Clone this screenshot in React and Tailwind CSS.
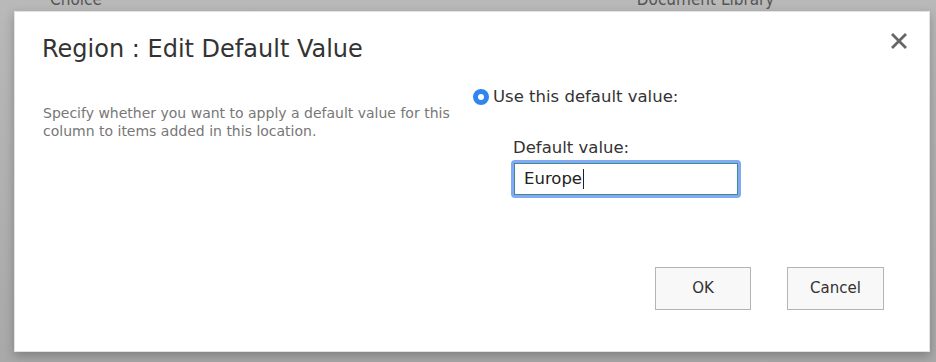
import React from "react";

const App = () => {
  return (
    <div
      className="w-[936px] h-[362px] overflow-hidden bg-gradient-to-b from-[#b9b9b9] to-[#a9a9a9] font-['DejaVu_Sans',sans-serif]"
    >
      <div className="h-[11px] overflow-hidden flex text-[17px] text-[#555] font-['DejaVu_Sans_Condensed','DejaVu_Sans',sans-serif]">
        <span className="ml-[50px] -mt-[12px] leading-[22px]">Choice</span>
        <span className="ml-[535px] -mt-[12px] leading-[22px]">Document Library</span>
      </div>
      <div className="ml-[14px] w-[916px] h-[341px] bg-white border border-[#e2e2e2] shadow-[0_4px_10px_rgba(0,0,0,0.25)] flex flex-col">
        <div className="flex justify-between pl-[27px] pr-[22px] pt-[21px]">
          <h1 className="text-[24px] leading-[32px] text-[#333]">Region : Edit Default Value</h1>
          <button className="self-start">
            <svg width="16" height="16" viewBox="0 0 16 16" className="block">
              <path d="M2 2 L14 14 M14 2 L2 14" stroke="#666" strokeWidth="2.8" strokeLinecap="square" />
            </svg>
          </button>
        </div>
        <div className="flex pl-[28px] pt-[19px]">
          <p className="w-[420px] pt-[20px] text-[14px] leading-[18px] text-[#777]">
            Specify whether you want to apply a default value for this column to items added in this location.
          </p>
          <div className="ml-[10px] flex flex-col">
            <label className="mt-[2px] flex items-center gap-[4px] text-[16.5px] leading-[22px] text-[#333]">
              <span className="w-[16px] h-[16px] rounded-full bg-[#2f86ee] flex items-center justify-center">
                <span className="w-[6px] h-[6px] rounded-full bg-white" />
              </span>
              Use this default value:
            </label>
            <div className="ml-[40px] mt-[29px] text-[16.5px] leading-[22px] text-[#333]">Default value:</div>
            <div className="ml-[38px] mt-[1px] w-[230px] rounded-[4px] bg-[#82a8f6] p-[3px]">
              <div className="h-[32px] bg-white border border-[#3c8d8d] flex items-center pl-[9px] text-[16.5px] text-[#222]">
                Europe<span className="ml-[1px] w-px h-[20px] bg-[#222]" />
              </div>
            </div>
          </div>
        </div>
        <div className="flex justify-end gap-[36px] pr-[45px] mt-auto mb-[41px]">
          <button className="w-[96px] h-[43px] bg-[#f8f8f8] border border-[#b4b4b4] text-[15px] text-[#333]">OK</button>
          <button className="w-[97px] h-[43px] bg-[#f8f8f8] border border-[#b4b4b4] text-[15px] text-[#333]">Cancel</button>
        </div>
      </div>
    </div>
  );
};

export default App;
